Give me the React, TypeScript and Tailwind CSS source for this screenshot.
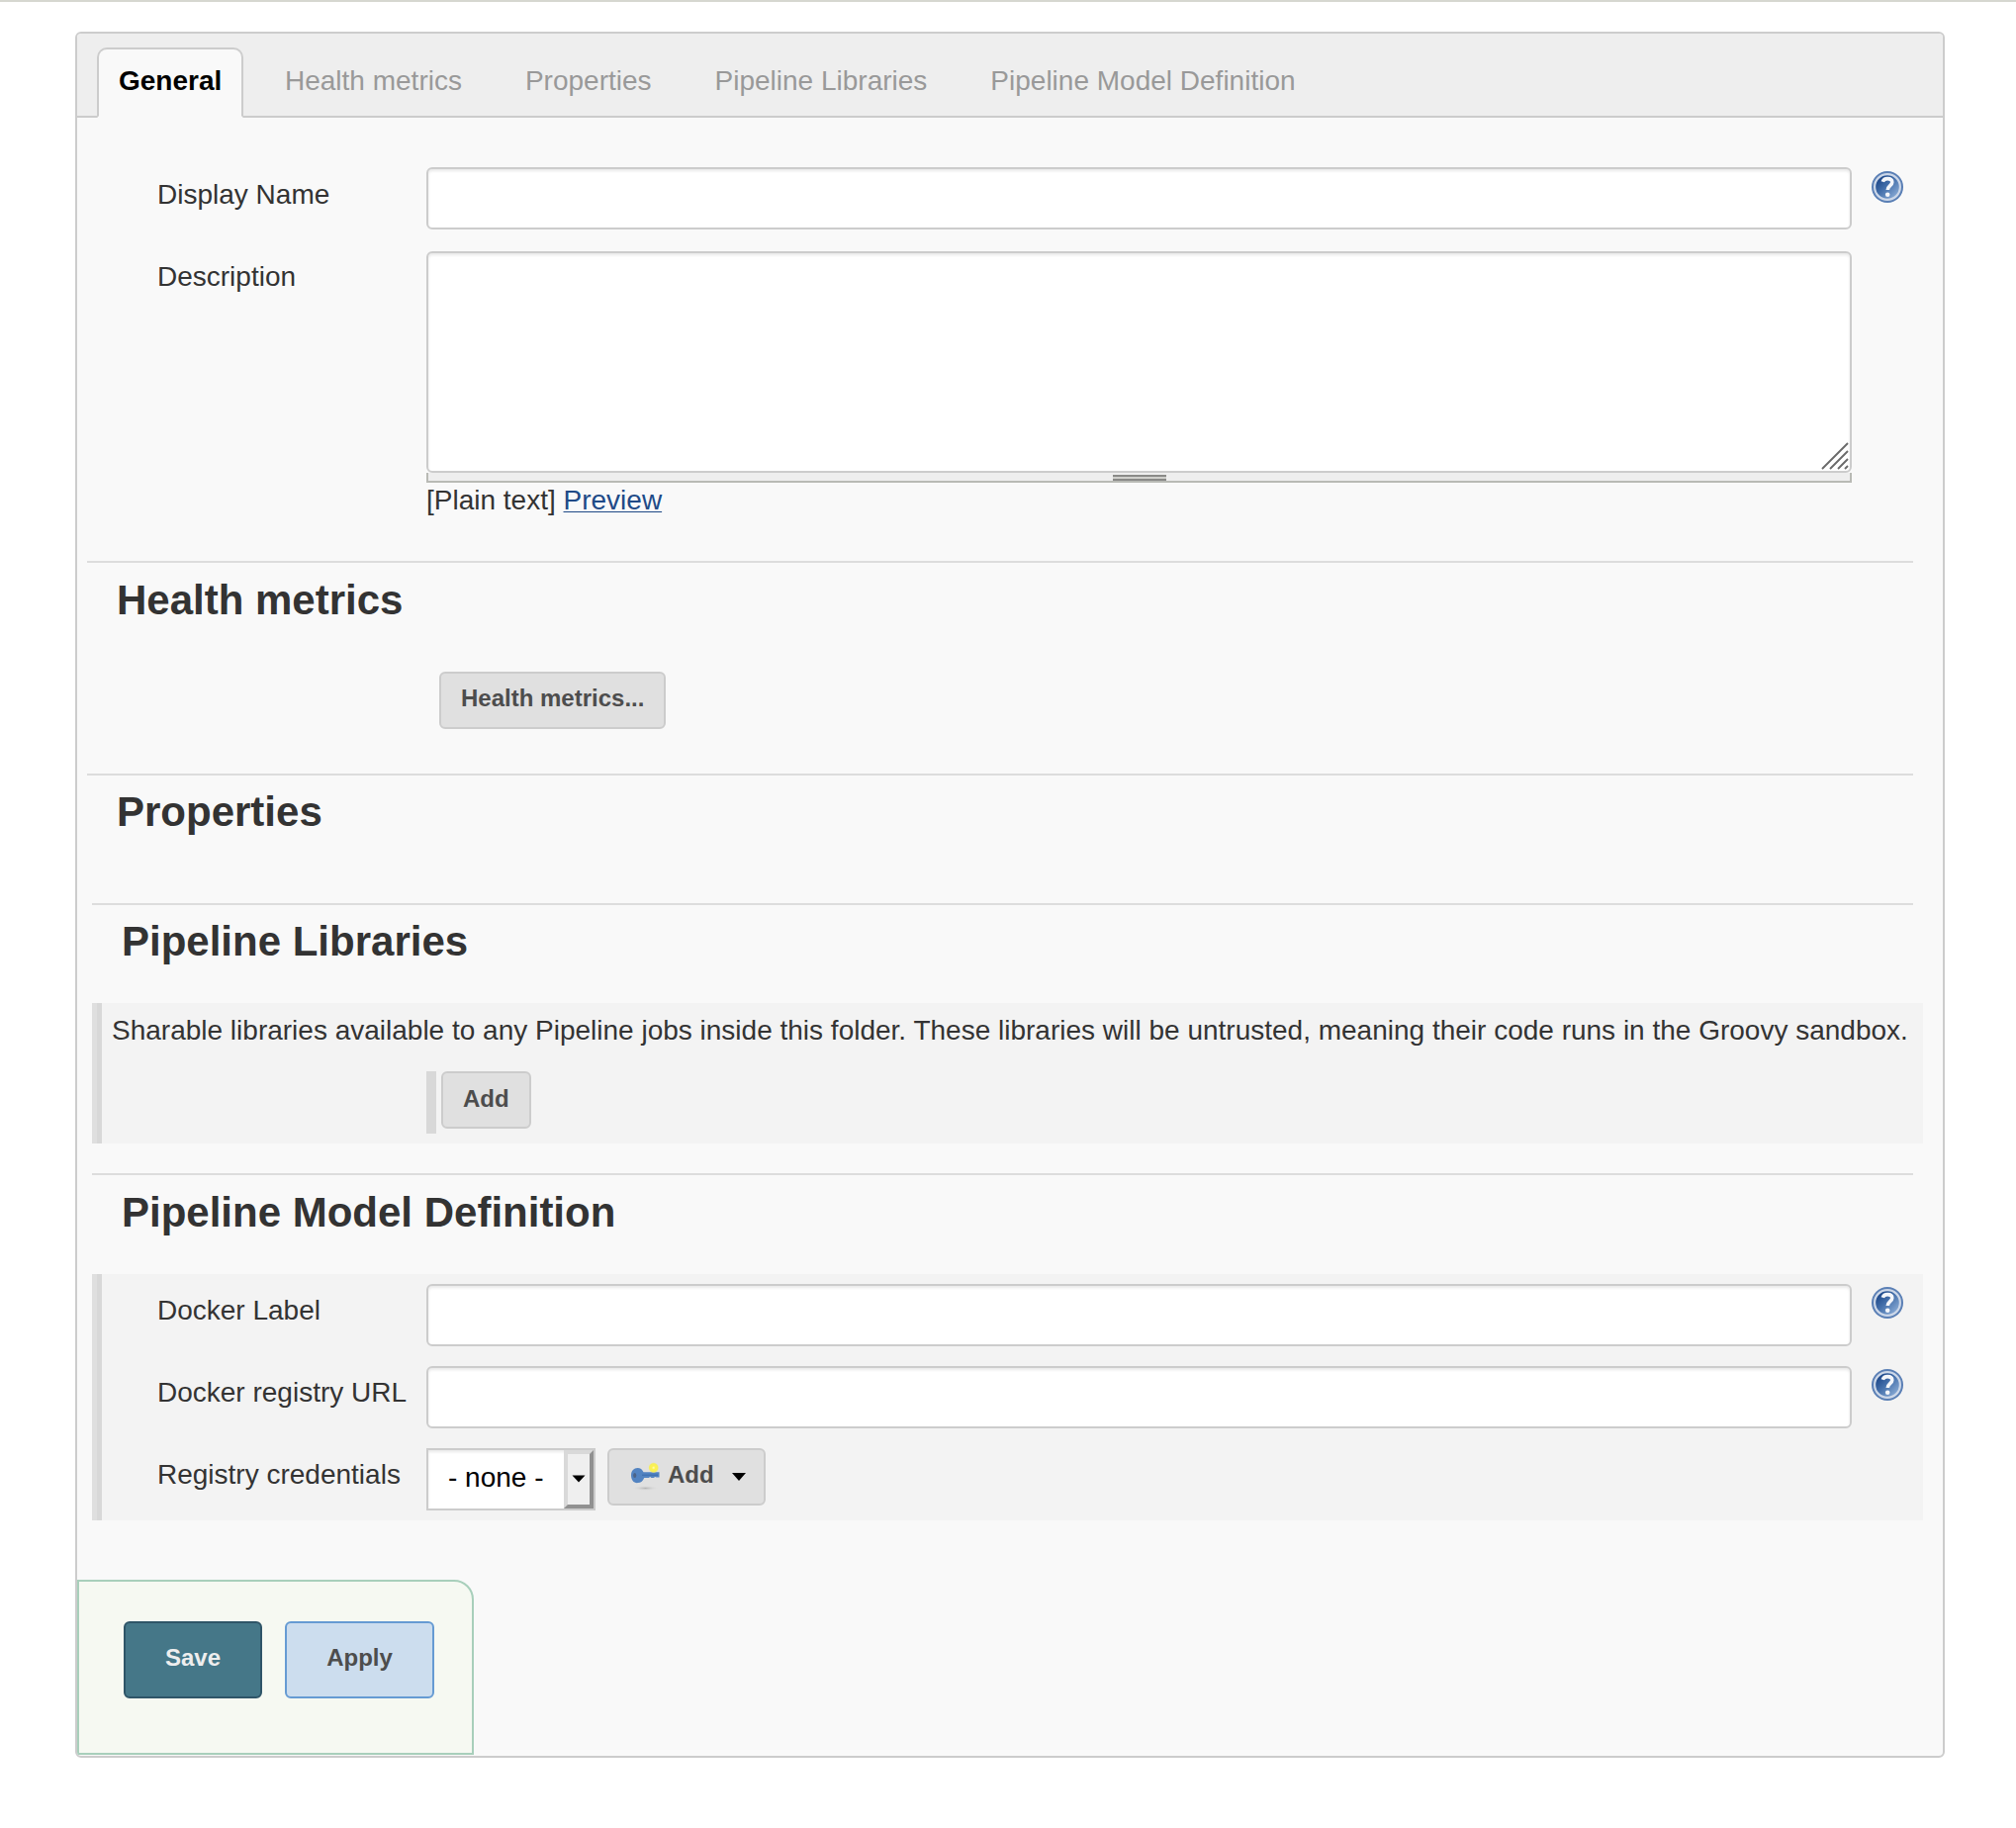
import React from "react";

function HelpIcon({ className = "" }: { className?: string }) {
  return (
    <svg viewBox="0 0 32 32" className={`ml-5 size-8 shrink-0 ${className}`}>
      <defs>
        <linearGradient id="help-fill" x1="0.1" y1="0.2" x2="0.8" y2="0.9">
          <stop offset="0" stopColor="#1c4688" />
          <stop offset="0.45" stopColor="#4570ab" />
          <stop offset="1" stopColor="#86a8d3" />
        </linearGradient>
      </defs>
      <circle cx="16" cy="16" r="16" fill="#5a7fb5" />
      <circle cx="16" cy="16" r="12.9" fill="url(#help-fill)" stroke="#ccd7e8" strokeWidth="2.2" />
      <path
        d="M11.3 10.7C12 8.600 13.700 7.600 16.100 7.600c3 0 4.700 1.600 4.700 3.700 0 3.300-4.500 3.500-4.500 7.700"
        fill="none"
        stroke="#f4f6fa"
        strokeWidth="3.6"
      />
      <circle cx="16.2" cy="23.800" r="2.3" fill="#f4f6fa" />
    </svg>
  );
}

function KeyIcon() {
  return (
    <svg viewBox="0 0 32 32" className="size-8 shrink-0">
      <defs>
        <radialGradient id="key-glow">
          <stop offset="0" stopColor="#fffcc0" />
          <stop offset="0.35" stopColor="#fdf24e" />
          <stop offset="0.8" stopColor="#f6ee5c" />
          <stop offset="1" stopColor="#f3ec70" stopOpacity="0.3" />
        </radialGradient>
        <radialGradient id="key-shadow">
          <stop offset="0" stopColor="#b4b4b4" />
          <stop offset="1" stopColor="#dfdfdf" stopOpacity="0" />
        </radialGradient>
      </defs>
      <ellipse cx="16.500" cy="27.500" rx="13" ry="2.600" fill="url(#key-shadow)" />
      <path
        d="M2 14.500C2 9.800 5 7 8.500 7c2.800 0 4.800 1.500 6 4.300H30.500v5.200h-3l-1.200-.6-1.600 1.200h-2.200l-1.300-1-1.400 1h-4.600c-1 3-3.400 5-6.400 5C4.700 22.500 2 19.200 2 14.500Z"
        fill="#5283c1"
      />
      <ellipse cx="5.700" cy="14.500" rx="1.600" ry="2.600" fill="#4c6488" />
      <path d="M13 14.200H29" stroke="#3f70b0" strokeWidth="1.200" />
      <circle cx="24.700" cy="6.800" r="5.200" fill="url(#key-glow)" />
    </svg>
  );
}

function TextInput() {
  return (
    <input
      type="text"
      className="h-[63px] w-[1441px] shrink-0 rounded-[6px] border-2 border-[#ccc] bg-white px-3 shadow-[inset_0_2px_3px_rgba(0,0,0,0.09)] outline-none"
    />
  );
}

function Row({ label, labelClass, className = "", children }: { label: string; labelClass: string; className?: string; children: React.ReactNode }) {
  return (
    <div className={`flex items-start ${className}`}>
      <label className={`w-[273px] shrink-0 pl-px leading-8 whitespace-nowrap ${labelClass}`}>{label}</label>
      {children}
    </div>
  );
}

function GreyButton({ className = "", children }: { className?: string; children: React.ReactNode }) {
  return (
    <button
      className={`flex h-[58px] items-start rounded-[6px] border-2 border-[#ccc] bg-[#e0e0e0] text-[24px] leading-7 font-bold whitespace-nowrap text-[#4d4d4d] ${className}`}
    >
      {children}
    </button>
  );
}

function SectionTitle({ className, children }: { className: string; children: React.ReactNode }) {
  return (
    <h2 className={`mr-[30px] border-t-2 border-[#ddd] pl-[30px] text-[42px] leading-[48px] font-bold ${className}`}>{children}</h2>
  );
}

const tabs = ["Health metrics", "Properties", "Pipeline Libraries", "Pipeline Model Definition"];

export default function App() {
  return (
    <div className="h-[1848px] w-[2038px] overflow-hidden border-t-2 border-[#d6d7d0] bg-white pt-[30px] pl-[76px] font-['Liberation_Sans',Arial,sans-serif] text-[28px] text-[#333]">
      <div className="h-[1745px] w-[1890px] overflow-hidden rounded-[6px] border-2 border-[#ccc] bg-[#f9f9f9]">
        <nav className="flex h-[85px] items-start border-b-2 border-[#ccc] bg-[#eee] pt-3.5 pl-5">
          <div className="h-[71px] w-[148px] shrink-0 rounded-t-[10px] border-2 border-[#ccc] border-b-[#f9f9f9] bg-[#f9f9f9] pt-4 pl-5 leading-8 font-bold text-black">
            General
          </div>
          <div className="flex gap-16 pt-[18px] pl-[42px] leading-8 whitespace-nowrap text-[#999]">
            {tabs.map((t) => (
              <a key={t}>{t}</a>
            ))}
          </div>
        </nav>

        <main className="flex flex-col">
          <div className="pt-[50px] pl-20">
            <Row label="Display Name" labelClass="pt-3">
              <TextInput />
              <HelpIcon className="mt-1" />
            </Row>
            <Row label="Description" labelClass="pt-2.5" className="mt-[22px]">
              <div className="w-[1441px]">
                <div className="flex h-56 items-end justify-end rounded-[6px] border-2 border-[#ccc] bg-white pr-px pb-px shadow-[inset_0_2px_3px_rgba(0,0,0,0.09)]">
                  <svg viewBox="0 0 28 28" className="size-7" fill="none" stroke="#6a6a6a" strokeWidth="1.9">
                    <path d="M1 27 27 1M9 27 27 9M17 27 27 17M24 27l3-3" />
                  </svg>
                </div>
                <div className="flex h-2.5 justify-center border-2 border-t-0 border-[#b9bab5] bg-[#eee] pt-0.5">
                  <div className="h-1.5 w-[54px] border-y-2 border-[#8a8a88] bg-[#d0d0cc]" />
                </div>
                <div className="mt-0.5 leading-8">
                  [Plain text]{" "}
                  <a className="text-[#204a87] underline decoration-1 underline-offset-[2px]">Preview</a>
                </div>
              </div>
            </Row>
          </div>

          <SectionTitle className="mt-[45px] ml-2.5 h-28 pt-3.5">Health metrics</SectionTitle>
          <div className="h-[103px] pl-[366px]">
            <GreyButton className="w-[229px] px-5 pt-[11px]">Health metrics...</GreyButton>
          </div>

          <SectionTitle className="ml-2.5 h-[131px] pt-[13px]">Properties</SectionTitle>

          <SectionTitle className="ml-[15px] h-[101px] pt-[13px]">Pipeline Libraries</SectionTitle>
          <div className="ml-[15px] flex h-[142px] w-[1851px] bg-[#f3f3f3]">
            <div className="w-[5px] bg-[#dfdfdf]" />
            <div className="w-[5px] bg-[#d8d8d8]" />
            <div className="pt-3 pl-2.5">
              <p className="leading-8 whitespace-nowrap">
                Sharable libraries available to any Pipeline jobs inside this folder. These libraries will be untrusted, meaning their code runs in the Groovy sandbox.
              </p>
              <div className="mt-[25px] ml-[318px] flex h-[63px] border-l-[10px] border-[#d8d8d8] pl-[5px]">
                <GreyButton className="w-[91px] px-5 pt-3">Add</GreyButton>
              </div>
            </div>
          </div>

          <SectionTitle className="mt-[30px] ml-[15px] h-[102px] pt-3.5">Pipeline Model Definition</SectionTitle>
          <div className="ml-[15px] flex h-[249px] w-[1851px] bg-[#f3f3f3]">
            <div className="w-[5px] bg-[#dfdfdf]" />
            <div className="w-[5px] bg-[#d8d8d8]" />
            <div className="flex flex-col gap-5 pt-2.5 pl-[55px]">
              <Row label="Docker Label" labelClass="pt-[11px]">
                <TextInput />
                <HelpIcon className="mt-[3px]" />
              </Row>
              <Row label="Docker registry URL" labelClass="pt-[11px]">
                <TextInput />
                <HelpIcon className="mt-[3px]" />
              </Row>
              <Row label="Registry credentials" labelClass="pt-[11px]">
                <div className="flex h-[63px] w-[171px] border-2 border-[#ccc] bg-white text-black shadow-[inset_0_2px_3px_rgba(0,0,0,0.09)]">
                  <span className="w-[137px] pt-3 pl-5 leading-8 whitespace-nowrap">- none -</span>
                  <span className="flex w-[30px] items-center justify-center border-4 border-t-[#d9d9d9] border-r-[#919191] border-b-[#919191] border-l-[#d9d9d9] bg-[#efefef] pb-0.5">
                    <svg viewBox="0 0 14 8" className="h-2 w-3.5">
                      <path d="M0.500 0.500h13L7 7.500Z" fill="#000" />
                    </svg>
                  </span>
                </div>
                <GreyButton className="ml-3 w-40 pl-5">
                  <span className="pt-[11px]">
                    <KeyIcon />
                  </span>
                  <span className="pt-[11px] pl-[7px]">Add</span>
                  <svg viewBox="0 0 14 8" className="mt-[23px] ml-[18px] h-2 w-3.5">
                    <path d="M0 0h14L7 8Z" fill="#000" />
                  </svg>
                </GreyButton>
              </Row>
            </div>
          </div>

          <div className="mt-[60px] flex h-[177px] w-[401px] rounded-tr-[20px] border-2 border-[#a8cfbb] bg-[#f6f9f2] pt-10 pl-[45px] text-[24px] font-bold">
            <button className="flex h-[78px] w-[140px] items-start justify-center rounded-[6px] border-2 border-[#2f5568] bg-[#457788] pt-[21px] leading-7 text-[#eee]">
              Save
            </button>
            <button className="ml-[23px] flex h-[78px] w-[151px] items-start justify-center rounded-[6px] border-2 border-[#669bd3] bg-[#ccddee] pt-[21px] leading-7 text-[#4d4d4d]">
              Apply
            </button>
          </div>
        </main>
      </div>
    </div>
  );
}
